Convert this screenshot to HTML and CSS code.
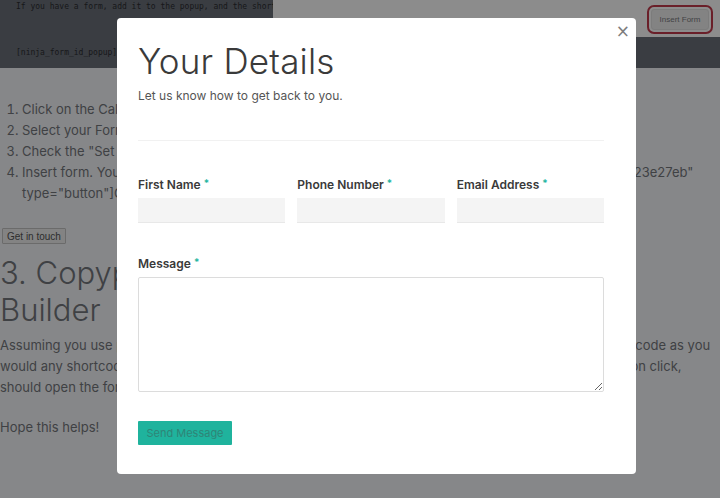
FILE: index.html
```html
<!DOCTYPE html>
<html>
<head>
<meta charset="utf-8">
<link rel="stylesheet" href="styles.css">
</head>
<body>
<div class="page">
  <div class="topbar">
    <div class="code-panel">
      <div class="code-line">If you have a form, add it to the popup, and the shortcode</div>
      <div class="code-line code-main">[ninja_form_id_popup]</div>
    </div>
    <div class="top-right">
      <div class="toolbar">
        <span class="highlight"><button class="insert-btn">Insert Form</button></span>
      </div>
      <div class="dark-strip"></div>
    </div>
  </div>

  <ol class="steps">
    <li>Click on the Calculator icon in your page editor toolbar.</li>
    <li>Select your Form from the dropdown list.</li>
    <li>Check the "Set as popup" option in the settings.</li>
    <li>Insert form. You will get a shortcode like [cp_popup_form title="Get in touch" id="cpf_5e8d4f3a71b123e27eb"<br>type="button"]Get in touch[/cp_popup_form]</li>
  </ol>

  <button class="touch-btn">Get in touch</button>

  <h2 class="section-title">3. Copypaste shortcode in Page<br>Builder</h2>
  <p class="para">Assuming you use page builder, simply add a fresh shortcode or text module to the page and paste the code as you<br>would any shortcode. A button will be rendered on your page wherever it is placed, it will show up and on click,<br>should open the form in a popup window.</p>
  <p class="para">Hope this helps!</p>
</div>

<div class="overlay"></div>

<div class="modal">
  <button class="close" aria-label="Close">&times;</button>
  <h1 class="modal-title">Your Details</h1>
  <p class="modal-sub">Let us know how to get back to you.</p>
  <div class="divider"></div>
  <div class="field-row">
    <div class="field">
      <label class="label">First Name <span class="req">*</span></label>
      <input class="input" type="text">
    </div>
    <div class="field">
      <label class="label">Phone Number <span class="req">*</span></label>
      <input class="input" type="text">
    </div>
    <div class="field">
      <label class="label">Email Address <span class="req">*</span></label>
      <input class="input" type="text">
    </div>
  </div>
  <div class="field message-field">
    <label class="label">Message <span class="req">*</span></label>
    <textarea class="textarea"></textarea>
  </div>
  <button class="send">Send Message</button>
</div>
</body>
</html>
```

FILE: styles.css
```css
* { box-sizing: border-box; }
html, body { margin: 0; padding: 0; }
body {
  width: 720px;
  height: 498px;
  overflow: hidden;
  background: #f4f6f9;
  font-family: Inter, "Noto Sans", sans-serif;
  color: #74777d;
  position: relative;
}
.page { width: 720px; }
.topbar { display: flex; height: 68px; }
.code-panel {
  width: 273px;
  background: #6a7079;
  padding: 2px 0 0 16px;
  overflow: hidden;
}
.code-line {
  font-family: "DejaVu Sans Mono", monospace;
  font-size: 8px;
  color: #2a2c30;
  white-space: nowrap;
  line-height: 10px;
}
.code-main { margin-top: 36px; }
.top-right { flex: 1; display: flex; flex-direction: column; }
.toolbar {
  height: 37px;
  background: #ffffff;
  display: flex;
  justify-content: flex-end;
  align-items: flex-start;
  padding: 5px 7px 0 0;
}
.highlight {
  display: inline-flex;
  border: 2px solid #c13a4c;
  border-radius: 7px;
  padding: 2px;
}
.insert-btn {
  font-family: "Liberation Sans", sans-serif;
  font-size: 8px;
  color: #7a7c80;
  background: #efefef;
  border: 1px solid #e2e2e2;
  border-radius: 3px;
  height: 21px;
  width: 58px;
  padding: 0;
}
.dark-strip { flex: 1; background: #6a7079; }

.steps {
  margin: 31px 0 0 0;
  padding: 0 0 0 22px;
  font-size: 13px;
  line-height: 21px;
}
.steps li { white-space: nowrap; }
.touch-btn {
  margin: 24px 0 0 2px;
  font-family: "Liberation Sans", sans-serif;
  font-size: 10px;
  color: #555;
  background: #efefef;
  border: 1px solid #c4c4c4;
  border-radius: 1px;
  height: 16px;
  padding: 0 4px;
  display: block;
}
.section-title {
  margin: 10px 0 0 0;
  font-size: 31px;
  font-weight: 300;
  line-height: 37px;
}
.para {
  margin: 7px 0 0 0;
  font-size: 13px;
  line-height: 21px;
  white-space: nowrap;
}
.para + .para { margin-top: 19px; }

.overlay {
  position: absolute;
  inset: 0;
  background: rgba(0, 0, 0, 0.45);
}

.modal {
  position: absolute;
  left: 117px;
  top: 18px;
  width: 519px;
  height: 456px;
  background: #fff;
  border-radius: 4px;
  padding: 22px 32px 0 21px;
  color: #333;
}
.close {
  position: absolute;
  top: 3px;
  right: 2px;
  border: 0;
  background: none;
  font-size: 17px;
  line-height: 20px;
  color: #7d7d7d;
  padding: 0 4px;
  font-family: "DejaVu Sans", sans-serif;
}
.modal-title {
  margin: 0;
  font-size: 35px;
  font-weight: 300;
  line-height: 42px;
  color: #3a3a3a;
  letter-spacing: 0.2px;
}
.modal-sub {
  margin: 6px 0 0 0;
  font-size: 12px;
  line-height: 16px;
  color: #555;
}
.divider {
  margin-top: 36px;
  height: 1px;
  background: #f1f1f1;
}
.field-row {
  margin-top: 34px;
  display: grid;
  grid-template-columns: repeat(3, minmax(0, 1fr));
  column-gap: 12px;
}
.field { display: flex; flex-direction: column; min-width: 0; }
.label {
  font-size: 12px;
  font-weight: 600;
  line-height: 16px;
  color: #3a3a3a;
  margin-bottom: 5px;
}
.req { color: #22b5a0; font-size: 10px; vertical-align: 2px; }
.input {
  width: 100%;
  min-width: 0;
  height: 25px;
  border: 0;
  border-bottom: 1px solid #e8e8e8;
  background: #f4f4f4;
  border-radius: 0;
}
.message-field { margin-top: 31px; }
.textarea {
  height: 115px;
  border: 1px solid #dcdcdc;
  border-radius: 2px;
  background: #fff;
  resize: both;
}
.send {
  margin-top: 29px;
  width: 94px;
  height: 24px;
  border: 0;
  border-radius: 1px;
  background: #1fb39d;
  color: #2f8577;
  font-family: Inter, sans-serif;
  font-size: 11px;
  padding: 0;
}
```
